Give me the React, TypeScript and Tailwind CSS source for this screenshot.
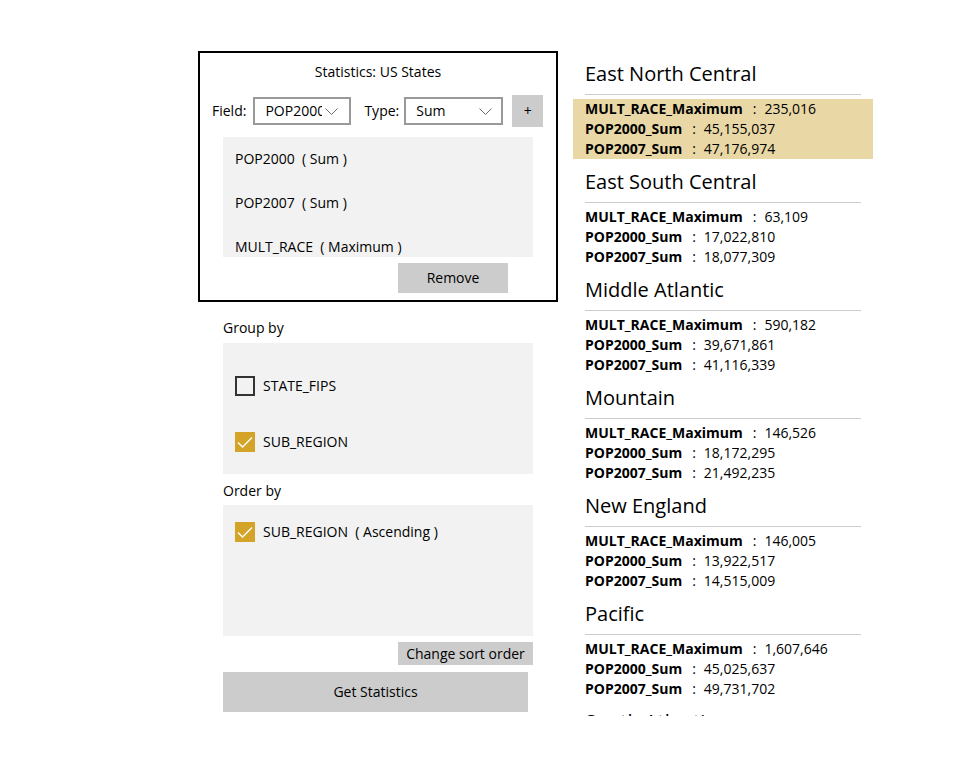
import React from 'react';

type Stat = { key: string; value: string };
type Group = { name: string; stats: Stat[]; selected?: boolean };

const groups: Group[] = [
  {
    name: 'East North Central',
    selected: true,
    stats: [
      { key: 'MULT_RACE_Maximum', value: '235,016' },
      { key: 'POP2000_Sum', value: '45,155,037' },
      { key: 'POP2007_Sum', value: '47,176,974' },
    ],
  },
  {
    name: 'East South Central',
    stats: [
      { key: 'MULT_RACE_Maximum', value: '63,109' },
      { key: 'POP2000_Sum', value: '17,022,810' },
      { key: 'POP2007_Sum', value: '18,077,309' },
    ],
  },
  {
    name: 'Middle Atlantic',
    stats: [
      { key: 'MULT_RACE_Maximum', value: '590,182' },
      { key: 'POP2000_Sum', value: '39,671,861' },
      { key: 'POP2007_Sum', value: '41,116,339' },
    ],
  },
  {
    name: 'Mountain',
    stats: [
      { key: 'MULT_RACE_Maximum', value: '146,526' },
      { key: 'POP2000_Sum', value: '18,172,295' },
      { key: 'POP2007_Sum', value: '21,492,235' },
    ],
  },
  {
    name: 'New England',
    stats: [
      { key: 'MULT_RACE_Maximum', value: '146,005' },
      { key: 'POP2000_Sum', value: '13,922,517' },
      { key: 'POP2007_Sum', value: '14,515,009' },
    ],
  },
  {
    name: 'Pacific',
    stats: [
      { key: 'MULT_RACE_Maximum', value: '1,607,646' },
      { key: 'POP2000_Sum', value: '45,025,637' },
      { key: 'POP2007_Sum', value: '49,731,702' },
    ],
  },
  {
    name: 'South Atlantic',
    stats: [
      { key: 'MULT_RACE_Maximum', value: '1,164,404' },
      { key: 'POP2000_Sum', value: '51,769,160' },
      { key: 'POP2007_Sum', value: '57,591,212' },
    ],
  },
];

const statFields = ['POP2000  ( Sum )', 'POP2007  ( Sum )', 'MULT_RACE  ( Maximum )'];

function Chevron() {
  return (
    <svg width="13" height="7" viewBox="0 0 13 7" fill="none" stroke="#6b6b6b" strokeWidth="1">
      <polyline points="0.5 0.5 6.5 6.5 12.5 0.5" />
    </svg>
  );
}

function Checkbox({ checked }: { checked: boolean }) {
  if (checked) {
    return (
      <div className="w-[20px] h-[20px] bg-[#d4a429] flex items-center justify-center shrink-0">
        <svg width="20" height="20" viewBox="0 0 20 20" fill="none" stroke="#ffffff" strokeWidth="1.4">
          <polyline points="3 10.5 7.5 15 17 5.5" />
        </svg>
      </div>
    );
  }
  return <div className="w-[20px] h-[20px] border-2 border-[#333333] shrink-0" />;
}

export default function App() {
  return (
    <div className="w-[953px] h-[770px] bg-white flex text-black font-['Open_Sans',sans-serif] text-[14px] leading-[20px]">
      {/* Left: statistics definition */}
      <div className="ml-[198px] mt-[51px] w-[360px] flex flex-col">
        <div className="h-[251px] border-2 border-black flex flex-col">
          <div className="pt-[9px] text-center">Statistics: US States</div>

          <div className="mt-[13px] pl-[12px] flex items-center h-[32px]">
            <span>Field:</span>
            <div className="ml-[7px] w-[98px] h-[28px] border-2 border-[#999999] flex items-center pl-[10px] pr-[11px]">
              <span className="w-[57px] overflow-hidden whitespace-nowrap">POP2000</span>
              <span className="ml-auto">
                <Chevron />
              </span>
            </div>
            <span className="ml-[13px]">Type:</span>
            <div className="ml-[5px] w-[99px] h-[28px] border-2 border-[#999999] flex items-center pl-[10px] pr-[9px]">
              <span>Sum</span>
              <span className="ml-auto">
                <Chevron />
              </span>
            </div>
            <button className="ml-[9px] w-[31px] h-[32px] bg-[#cccccc] flex items-center justify-center">+</button>
          </div>

          <div className="mt-[10px] ml-[23px] w-[310px] h-[120px] bg-[#f2f2f2] overflow-hidden">
            {statFields.map((f) => (
              <div key={f} className="h-[44px] pl-[12px] flex items-center whitespace-pre">
                {f}
              </div>
            ))}
          </div>

          <button className="mt-[6px] ml-[198px] w-[110px] h-[30px] bg-[#cccccc]">Remove</button>
        </div>

        <div className="pl-[25px] flex flex-col">
          <div className="mt-[16px]">Group by</div>
          <div className="mt-[5px] w-[310px] h-[131px] bg-[#f2f2f2] pt-[15px]">
            <div className="h-[56px] pl-[12px] flex items-center gap-[8px]">
              <Checkbox checked={false} />
              <span>STATE_FIPS</span>
            </div>
            <div className="h-[56px] pl-[12px] flex items-center gap-[8px]">
              <Checkbox checked />
              <span>SUB_REGION</span>
            </div>
          </div>

          <div className="mt-[7px]">Order by</div>
          <div className="mt-[4px] w-[310px] h-[131px] bg-[#f2f2f2]">
            <div className="h-[53px] pl-[12px] flex items-center gap-[8px]">
              <Checkbox checked />
              <span className="whitespace-pre">SUB_REGION  ( Ascending )</span>
            </div>
          </div>

          <button className="mt-[6px] ml-[175px] w-[135px] h-[23px] bg-[#cccccc] flex items-center justify-center">
            Change sort order
          </button>
          <button className="mt-[7px] w-[305px] h-[40px] bg-[#cccccc]">Get Statistics</button>
        </div>
      </div>

      {/* Right: results */}
      <div className="ml-[15px] mt-[57px] w-[300px] h-[659px] overflow-hidden">
        {groups.map((g) => (
          <div key={g.name} className="mb-[6px]">
            <div className="px-[12px] pt-[3px] pb-[6px] text-[20px] leading-[28px]">{g.name}</div>
            <div className="mx-[12px] h-[1px] bg-[#cccccc]" />
            <div className={`mt-[4px] px-[12px] ${g.selected ? 'bg-[#e9d8a6]' : ''}`}>
              {g.stats.map((s) => (
                <div key={s.key} className="h-[20px] flex items-center whitespace-nowrap">
                  <span className="font-bold">{s.key}</span>
                  <span className="ml-[10px] mr-[8px]">:</span>
                  <span>{s.value}</span>
                </div>
              ))}
            </div>
          </div>
        ))}
      </div>
    </div>
  );
}
